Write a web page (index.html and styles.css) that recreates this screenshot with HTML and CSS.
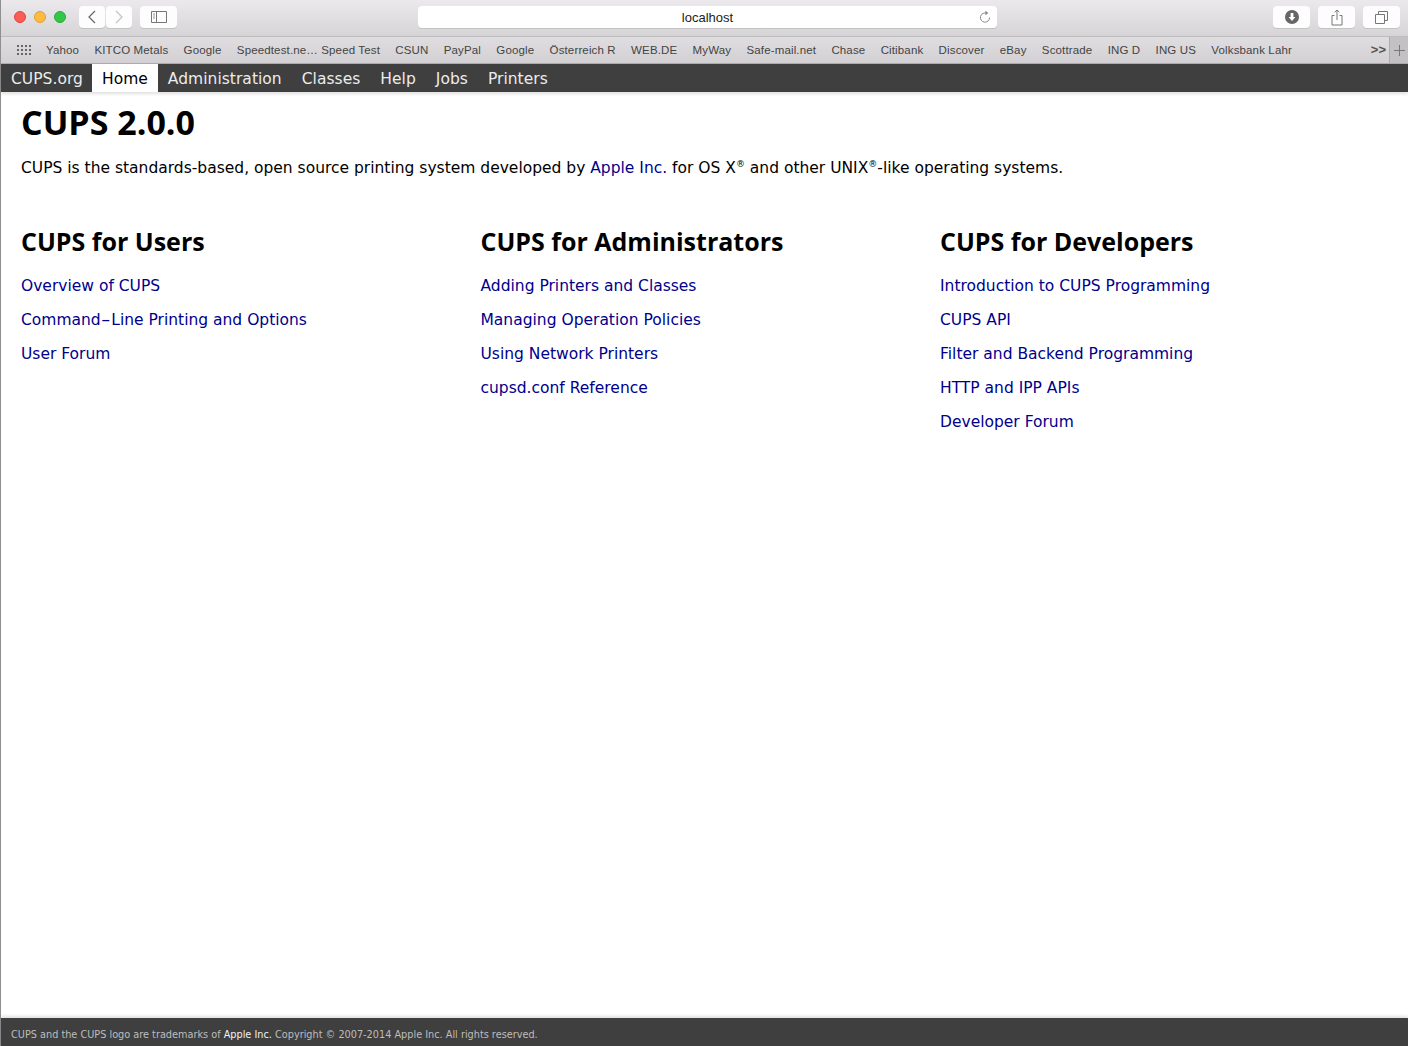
FILE: index.html
```html
<!DOCTYPE html>
<html lang="en">
<head>
<meta charset="utf-8">
<title>Home - CUPS 2.0.0</title>
<link rel="stylesheet" href="styles.css">
</head>
<body>
<div class="window">
  <header class="toolbar">
    <div class="traffic">
      <span class="light red"></span><span class="light yellow"></span><span class="light green"></span>
    </div>
    <div class="nav-pair">
      <button class="tbtn back"><svg width="10" height="16" viewBox="0 0 10 16"><path d="M8 2 2 8l6 6" fill="none" stroke="#6b6b6b" stroke-width="1.3"/></svg></button>
      <button class="tbtn forward"><svg width="10" height="16" viewBox="0 0 10 16"><path d="M2 2l6 6-6 6" fill="none" stroke="#c4c4c4" stroke-width="1.3"/></svg></button>
    </div>
    <button class="tbtn sidebar"><svg width="16" height="12" viewBox="0 0 16 12"><path d="M.5.5h15v11H.5zM5.5.5v11" fill="none" stroke="#777"/><path d="M2 3h2M2 5h2M2 7h2" stroke="#999"/></svg></button>
    <div class="address">
      <span class="host">localhost</span>
      <svg class="reload" width="12" height="14" viewBox="0 0 12 14"><path d="M7.8 3.3A4.6 4.6 0 1 0 10.6 7.5" fill="none" stroke="#8a8a8a"/><path d="M6.4 0.8 9.4 3 6.4 5.2z" fill="#8a8a8a"/></svg>
    </div>
    <div class="actions">
      <button class="tbtn action"><svg width="14" height="14" viewBox="0 0 14 14"><circle cx="7" cy="7" r="7" fill="#666"/><path d="M5.6 3h2.8v4h2L7 11 3.600 7h2z" fill="#fff"/></svg></button>
      <button class="tbtn action"><svg width="12" height="17" viewBox="0 0 12 17"><path d="M3.500 6.500H1v9.500h10V6.500H8.500M6 11V1M3.700 3.200 6 1l2.300 2.200" fill="none" stroke="#777"/></svg></button>
      <button class="tbtn action"><svg width="13" height="13" viewBox="0 0 13 13"><path d="M3.500 3V.5h9v9H10M.5 3.500h9v9h-9z" fill="none" stroke="#777"/></svg></button>
    </div>
  </header>
  <nav class="bookmarks">
    <svg class="grid-icon" width="15" height="11" viewBox="0 0 15 11" fill="#666"><path d="M0 0h2v2H0zM4 0h2v2H4zM8 0h2v2H8zM12 0h2v2h-2zM0 4h2v2H0zM4 4h2v2H4zM8 4h2v2H8zM12 4h2v2h-2zM0 8h2v2H0zM4 8h2v2H4zM8 8h2v2H8zM12 8h2v2h-2z"/></svg>
    <ul class="bm-list">
      <li>Yahoo</li><li>KITCO Metals</li><li>Google</li><li>Speedtest.ne… Speed Test</li><li>CSUN</li><li>PayPal</li><li>Google</li><li>Österreich R</li><li>WEB.DE</li><li>MyWay</li><li>Safe-mail.net</li><li>Chase</li><li>Citibank</li><li>Discover</li><li>eBay</li><li>Scottrade</li><li>ING D</li><li>ING US</li><li>Volksbank Lahr</li>
    </ul>
    <span class="more">&gt;&gt;</span>
    <span class="newtab"><svg width="11" height="11" viewBox="0 0 11 11"><path d="M5.500 0v11M0 5.500h11" stroke="#777"/></svg></span>
  </nav>
  <nav class="cups-nav">
    <a href="#" class="brand">CUPS.org</a>
    <a href="#" class="active">Home</a>
    <a href="#">Administration</a>
    <a href="#">Classes</a>
    <a href="#">Help</a>
    <a href="#">Jobs</a>
    <a href="#">Printers</a>
  </nav>
  <main class="content">
    <h1>CUPS 2.0.0</h1>
    <p class="intro">CUPS is the standards-based, open source printing system developed by <a href="#">Apple Inc.</a> for OS X<sup>®</sup> and other UNIX<sup>®</sup>-like operating systems.</p>
    <div class="columns">
      <section>
        <h2>CUPS for Users</h2>
        <a href="#">Overview of CUPS</a>
        <a href="#">Command<span class="dash">-</span>Line Printing and Options</a>
        <a href="#">User Forum</a>
      </section>
      <section>
        <h2>CUPS for Administrators</h2>
        <a href="#">Adding Printers and Classes</a>
        <a href="#">Managing Operation Policies</a>
        <a href="#">Using Network Printers</a>
        <a href="#">cupsd.conf Reference</a>
      </section>
      <section>
        <h2>CUPS for Developers</h2>
        <a href="#">Introduction to CUPS Programming</a>
        <a href="#">CUPS API</a>
        <a href="#">Filter and Backend Programming</a>
        <a href="#">HTTP and IPP APIs</a>
        <a href="#">Developer Forum</a>
      </section>
    </div>
  </main>
  <footer class="footer">CUPS and the CUPS logo are trademarks of <a href="#">Apple Inc.</a> Copyright © 2007-2014 Apple Inc. All rights reserved.</footer>
</div>
</body>
</html>
```

FILE: styles.css
```css
* { box-sizing: border-box; }
html, body { margin: 0; height: 100%; }
body { font-family: "DejaVu Sans", Verdana, sans-serif; background: #fff; overflow: hidden; }
.window { height: 1046px; display: flex; flex-direction: column; border-left: 1px solid #8f8f8f; }

.toolbar { height: 37px; flex: none; display: flex; align-items: flex-start; padding-top: 6px; background: linear-gradient(#ebe9eb, #d6d4d6); border-bottom: 1px solid #bdbdbd; }
.traffic { display: flex; gap: 8px; margin: 5px 0 0 13px; }
.light { width: 12px; height: 12px; border-radius: 50%; }
.red { background: #fc5b57; border: 1px solid #e3453f; }
.yellow { background: #fdbb40; border: 1px solid #e0a030; }
.green { background: #33c748; border: 1px solid #28ab39; }
.tbtn { display: flex; align-items: center; justify-content: center; padding: 0; height: 22px; background: #fdfdfd; border: 0; border-radius: 4px; box-shadow: 0 1px 0 #c4c2c4; }
.nav-pair { display: flex; gap: 1px; margin-left: 13px; }
.back, .forward { width: 26px; }
.sidebar { width: 37px; margin-left: 8px; }
.address { width: 579px; height: 22px; margin-left: 241px; padding-top: 1px; display: flex; align-items: center; justify-content: center; position: relative; background: #fff; border-radius: 4px; box-shadow: 0 1px 0 #c4c2c4; }
.host { font: 13px/21px "Liberation Sans", Arial, sans-serif; color: #1c1c1c; }
.reload { position: absolute; right: 6px; top: 4px; }
.actions { display: flex; gap: 8px; margin-left: auto; margin-right: 8px; }
.action { width: 37px; }

.bookmarks { height: 27px; flex: none; display: flex; align-items: center; background: linear-gradient(#dfdddf, #d2d0d2); border-bottom: 1px solid #adadad; }
.grid-icon { margin-left: 16px; flex: none; }
.bm-list { display: flex; gap: 15.3px; margin: 0 0 0 14px; padding: 0; list-style: none; font: 11.5px/26px "Liberation Sans", Arial, sans-serif; color: #444; letter-spacing: .14px; white-space: nowrap; }
.more { margin-left: auto; font: 700 13px/26px "Liberation Sans", Arial, sans-serif; color: #555; }
.newtab { width: 19px; height: 26px; margin-left: 3px; display: flex; align-items: center; justify-content: center; background: #c3c1c3; border-left: 1px solid #adadad; }

.cups-nav { height: 28px; flex: none; display: flex; background: #3f3f3f; box-shadow: 0 2px 3px rgba(0,0,0,.12); font-size: 15.5px; line-height: 30px; letter-spacing: .03px; }
.cups-nav a { padding: 0 10px; color: #ececec; text-decoration: none; }
.cups-nav a.brand { margin-right: -1px; }
.cups-nav a.active { background: #fff; color: #000; }

.content { flex: 1; padding: 0 20px; min-height: 0; }
h1 { margin: 8px 0 0; font-family: "Open Sans", "DejaVu Sans", sans-serif; font-size: 34px; line-height: 44px; font-weight: 700; color: #000; }
.intro { margin: 12px 0 0; font-size: 15.5px; line-height: 24px; color: #000; }
.intro a { color: #00008b; text-decoration: none; }
sup { font-size: 9px; line-height: 0; }
.columns { display: grid; grid-template-columns: repeat(3, 459.5px); margin-top: 45px; }
h2 { margin: 0 0 12px; font-family: "Open Sans", "DejaVu Sans", sans-serif; font-size: 25px; line-height: 32px; font-weight: 700; color: #000; }
section a { display: block; font-size: 15.5px; line-height: 34px; color: #00008b; text-decoration: none; }
.dash { display: inline-block; margin: 0 2.5px; transform: scaleX(1.7); }

.footer { height: 28px; flex: none; padding: 9px 10px 0; background: #3f3f3f; box-shadow: 0 -2px 3px rgba(0,0,0,.12); color: #bdbdbd; font-size: 9.72px; line-height: 16px; }
.footer a { color: #f2f2f2; text-decoration: none; }
```
